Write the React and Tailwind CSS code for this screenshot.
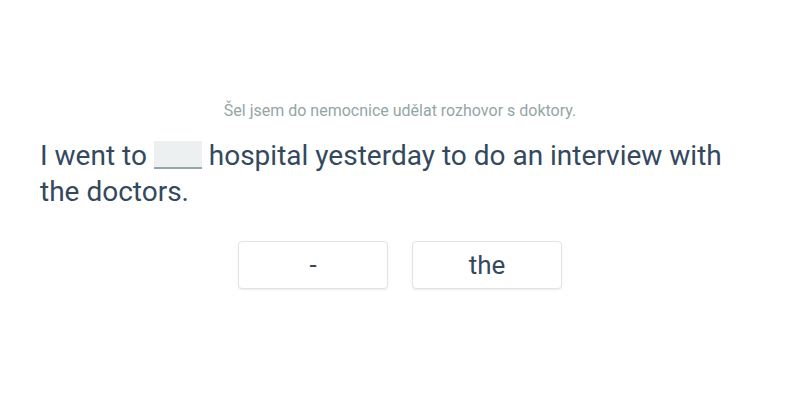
import React from 'react';

export default function App() {
  const options = ['-', 'the'];

  return (
    <div className="w-[800px] h-[400px] bg-white font-['Roboto',sans-serif]">
      <div className="px-10 pt-[100px]">
        <p className="text-center text-[16px] leading-[22px] text-[#95a5a6]">
          Šel jsem do nemocnice udělat rozhovor s doktory.
        </p>
        <p className="mt-[16px] text-[28px] leading-[36px] text-[#34495e]">
          I went to{' '}
          <span className="inline-block w-12 h-[28px] align-[-4px] bg-[#ecf0f1] border-b-2 border-[#95a5a6]"></span>{' '}
          hospital yesterday to do an interview with the doctors.
        </p>
        <div className="flex justify-center gap-6 mt-[31px]">
          {options.map((o) => (
            <button
              key={o}
              className="w-[150px] h-12 rounded bg-white border border-[#e3e3e3] shadow-[0_1px_2px_rgba(0,0,0,0.08)] text-[26px] text-[#34495e]"
            >
              {o}
            </button>
          ))}
        </div>
      </div>
    </div>
  );
}
